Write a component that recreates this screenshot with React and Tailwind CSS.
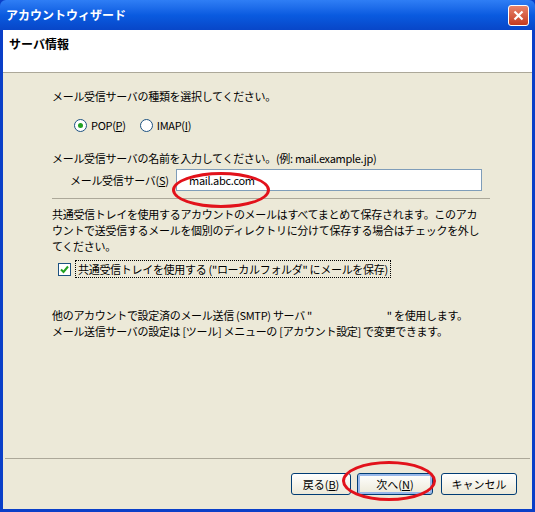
import React from 'react';

const F = { fontFamily: '"MS UI Gothic","Noto Sans CJK JP","Liberation Sans",sans-serif' };

function Btn({ children, cls = '' }) {
  return (
    <div className={`h-[22px] rounded-[3px] border border-[#003c74] bg-gradient-to-b from-white to-[#ece9d8] flex items-center justify-center text-[11px] text-black ${cls}`}>
      {children}
    </div>
  );
}

export default function App() {
  return (
    <div className="w-[535px] h-[512px] bg-[#0a3fc8] flex flex-col relative" style={F}>
      <div className="h-[30px] flex items-center justify-between px-[6px] bg-gradient-to-b from-[#2f7ef5] via-[#0a5be0] to-[#0846c8] rounded-t-[6px]">
        <span className="text-white text-[12px] font-bold">アカウントウィザード</span>
        <div className="w-[21px] h-[21px] rounded-[3px] border border-white bg-gradient-to-b from-[#e8826a] to-[#c4391c] flex items-center justify-center">
          <svg width="11" height="11" viewBox="0 0 11 11"><path d="M1.5 1.5L9.5 9.5M9.5 1.5L1.5 9.5" stroke="white" strokeWidth="2.2" /></svg>
        </div>
      </div>
      <div className="flex-1 mx-[3px] mb-[3px] bg-[#ece9d8] flex flex-col">
        <div className="h-[43px] bg-white border-b border-[#aca899] px-[6px] pt-[5px] text-[12px] font-bold">サーバ情報</div>
        <div className="flex-1 pl-[49px] pr-[50px] text-[11px] leading-[16px] tracking-[-0.3px] text-black">
          <div className="mt-[15px]">メール受信サーバの種類を選択してください。</div>
          <div className="flex items-center gap-[4px] mt-[13px] ml-[22px]">
            <span className="w-[13px] h-[13px] rounded-full border border-[#1c5180] bg-white flex items-center justify-center"><span className="w-[5px] h-[5px] rounded-full bg-[#21a121]" /></span>
            <span>POP(<u>P</u>)</span>
            <span className="w-[13px] h-[13px] rounded-full border border-[#1c5180] bg-white ml-[10px]" />
            <span>IMAP(<u>I</u>)</span>
          </div>
          <div className="mt-[17px]">メール受信サーバの名前を入力してください。(例: mail.example.jp)</div>
          <div className="flex items-center mt-[3px] ml-[18px]">
            <span className="w-[106px] whitespace-nowrap">メール受信サーバ(<u>S</u>)</span>
            <div className="flex-1 h-[22px] bg-white border border-[#7f9db9] flex items-center px-[12px]">mail.abc.com</div>
          </div>
          <div className="border-t border-[#aca899] mt-[7px] mr-[-8px]" />
          <div className="mt-[7px]">共通受信トレイを使用するアカウントのメールはすべてまとめて保存されます。このアカウントで送受信するメールを個別のディレクトリに分けて保存する場合はチェックを外してください。</div>
          <div className="flex items-center gap-[4px] mt-[6px] ml-[6px]">
            <span className="w-[13px] h-[13px] border border-[#1c5180] bg-white flex items-center justify-center">
              <svg width="9" height="9" viewBox="0 0 9 9"><path d="M1 4.5L3.5 7L8 1.5" stroke="#21a121" strokeWidth="2" fill="none" /></svg>
            </span>
            <span className="border border-dotted border-black px-[2px]">共通受信トレイを使用する ("ローカルフォルダ" にメールを保存)</span>
          </div>
          <div className="mt-[29px]">他のアカウントで設定済のメール送信 (SMTP) サーバ "　　　　　　　" を使用します。<br />メール送信サーバの設定は [ツール] メニューの [アカウント設定] で変更できます。</div>
        </div>
        <div className="border-t border-[#aca899] mx-[2px]" />
        <div className="h-[50px] flex items-center justify-end gap-[6px] pr-[15px]">
          <Btn cls="w-[60px]">戻る(<u>B</u>)</Btn>
          <Btn cls="w-[76px] border-[#003c74] shadow-[inset_0_0_0_2px_#98b8ea]">次へ(<u>N</u>)</Btn>
          <Btn cls="w-[76px] ml-[2px]">キャンセル</Btn>
        </div>
      </div>
      <div className="absolute left-[172px] top-[172px] w-[98px] h-[36px] rounded-[50%] border-[3px] border-[#e2121b]" />
      <div className="absolute left-[342px] top-[461px] w-[94px] h-[40px] rounded-[50%] border-[3px] border-[#e2121b]" />
    </div>
  );
}
